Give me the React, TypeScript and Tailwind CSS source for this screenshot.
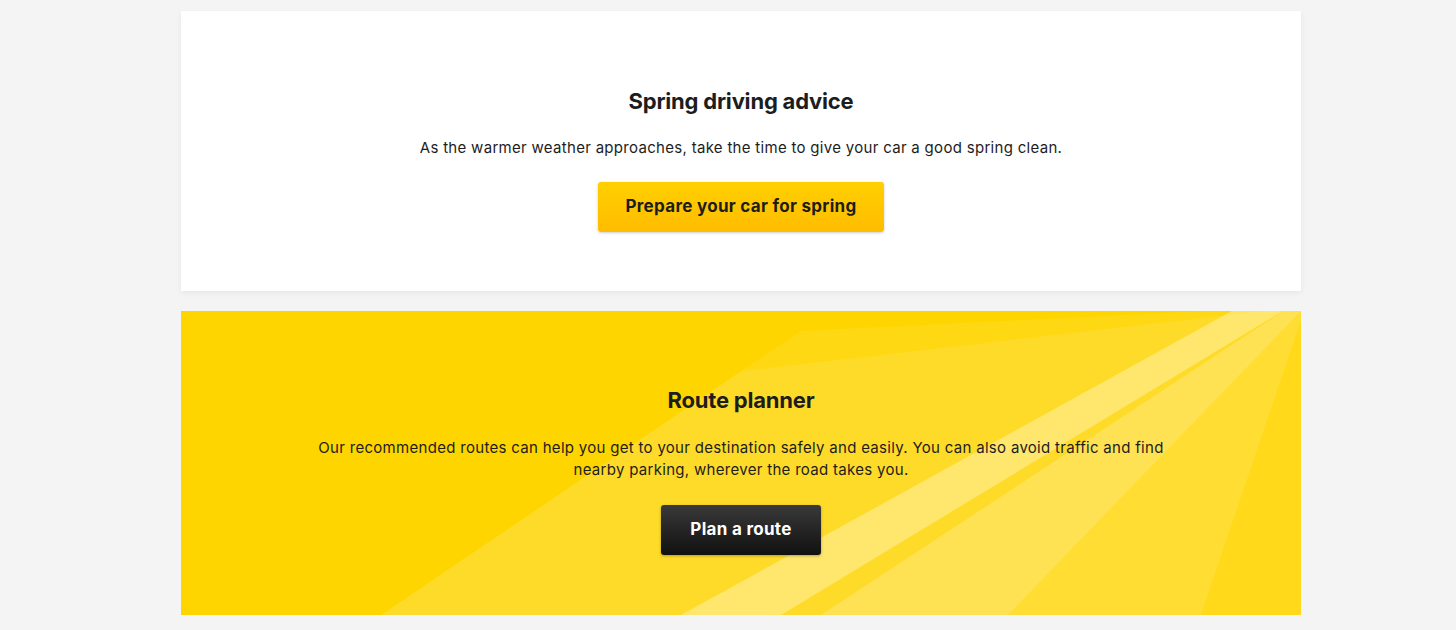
import React from "react";

const font = { fontFamily: "Inter, 'Noto Sans', sans-serif" };

// sun rays behind the route planner block
const Rays = () => (
  <svg
    className="absolute inset-0 h-full w-full"
    viewBox="0 0 1120 303"
    preserveAspectRatio="none"
  >
    <polygon points="1125,-5 560,60 200,303 827,303" fill="#fff" opacity="0.16" />
    <polygon points="1125,-5 620,20 560,60" fill="#fff" opacity="0.08" />
    <polygon points="1060,-5 1110,-5 600,303 500,303" fill="#fff" opacity="0.32" />
    <polygon points="1110,-5 1125,-5 827,303 640,303" fill="#fff" opacity="0.2" />
    <polygon points="1125,-5 827,303 1020,303" fill="#fff" opacity="0.2" />
    <polygon points="1125,-5 1020,303 1120,303 1120,40" fill="#fff" opacity="0.1" />
  </svg>
);

export default function App() {
  return (
    <div className="min-h-screen bg-[#f4f4f4] pt-[11px] pb-4" style={font}>
      <div className="ml-[181px] w-[1120px] space-y-5">
        {/* Spring advice */}
        <section className="bg-white shadow-[0_2px_6px_rgba(0,0,0,0.06)] pt-[76px] pb-[59px] flex flex-col items-center text-[#1d1d1d]">
          <h2 className="text-[22px] leading-[28px] font-bold tracking-[-0.2px]">Spring driving advice</h2>
          <p className="mt-[22px] text-[15px] leading-[22px] tracking-[0.3px]">
            As the warmer weather approaches, take the time to give your car a good spring clean.
          </p>
          <button className="mt-[23px] h-[50px] w-[286px] rounded-[3px] bg-gradient-to-b from-[#ffd000] to-[#ffbc00] shadow-[0_1px_3px_rgba(0,0,0,0.2)] text-[17px] font-bold tracking-[0.3px] text-[#1d1d1d]">
            Prepare your car for spring
          </button>
        </section>

        {/* Route planner */}
        <section className="relative overflow-hidden bg-[#ffd500] pt-[75px] pb-[60px] flex flex-col items-center text-[#1d1d1d]">
          <Rays />
          <h2 className="relative text-[22px] leading-[28px] font-bold tracking-[-0.2px]">Route planner</h2>
          <p className="relative mt-[23px] w-[860px] text-center text-[15px] leading-[22px] tracking-[0.3px]">
            Our recommended routes can help you get to your destination safely and easily. You can also avoid traffic and find nearby parking, wherever the road takes you.
          </p>
          <button className="relative mt-[24px] h-[50px] w-[160px] rounded-[3px] bg-gradient-to-b from-[#3a3a3a] to-[#111] shadow-[0_1px_3px_rgba(0,0,0,0.3)] text-[17px] font-bold tracking-[0.3px] text-white">
            Plan a route
          </button>
        </section>
      </div>
    </div>
  );
}
